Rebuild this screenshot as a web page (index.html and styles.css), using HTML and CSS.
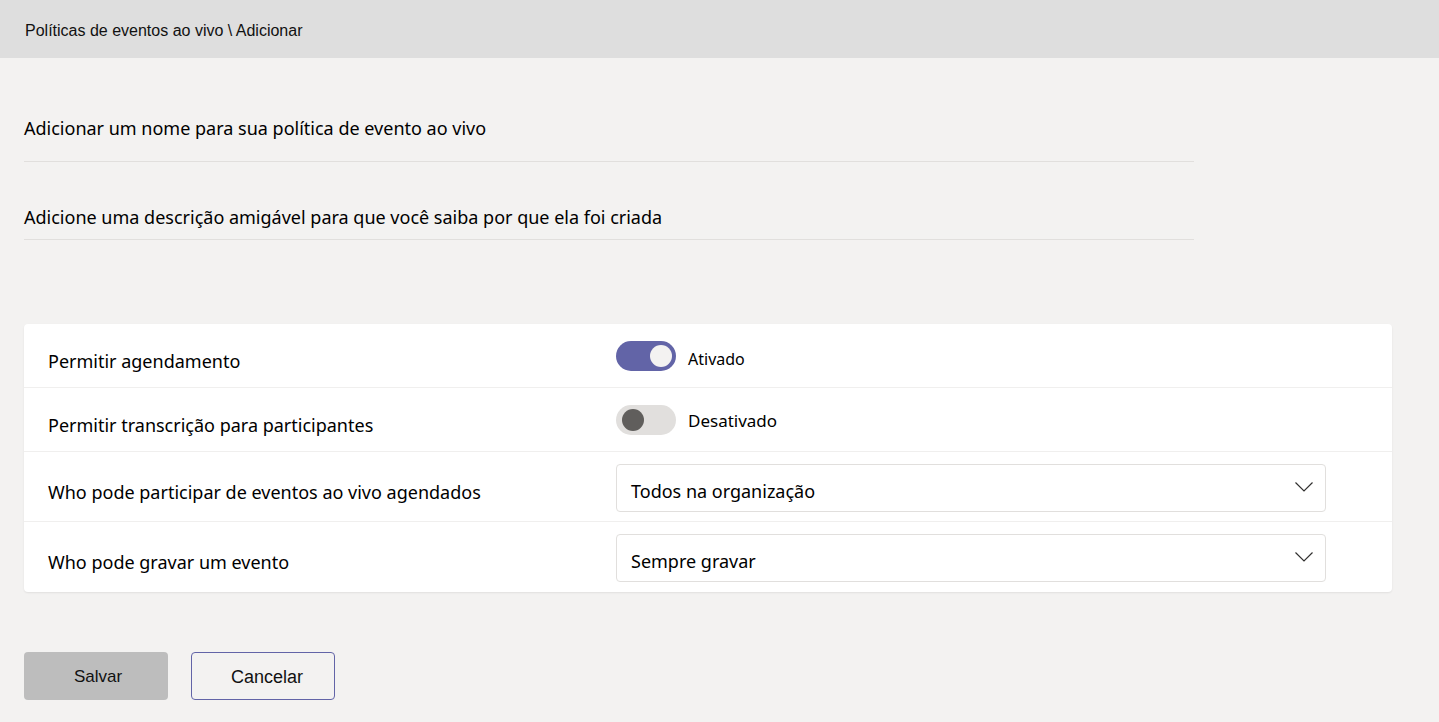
FILE: index.html
```html
<!DOCTYPE html>
<html lang="pt">
<head>
<meta charset="utf-8">
<title>Políticas de eventos ao vivo</title>
<link rel="stylesheet" href="styles.css">
</head>
<body>
<header class="topbar">Políticas de eventos ao vivo \ Adicionar</header>
<main class="content">
  <div class="field field-name">Adicionar um nome para sua política de evento ao vivo</div>
  <div class="field field-desc">Adicione uma descrição amigável para que você saiba por que ela foi criada</div>

  <section class="card">
    <div class="row row-toggle first">
      <div class="label">Permitir agendamento</div>
      <div class="control">
        <span class="toggle on"><span class="knob"></span></span>
        <span class="state">Ativado</span>
      </div>
    </div>
    <div class="row row-toggle">
      <div class="label">Permitir transcrição para participantes</div>
      <div class="control">
        <span class="toggle off"><span class="knob"></span></span>
        <span class="state state-off">Desativado</span>
      </div>
    </div>
    <div class="row row-select">
      <div class="label">Who pode participar de eventos ao vivo agendados</div>
      <div class="control">
        <div class="select">
          <span class="select-text">Todos na organização</span>
          <svg class="chev" width="18" height="10" viewBox="0 0 18 10"><path d="M0.5 0.5 L9 9 L17.5 0.5" fill="none" stroke="#323130" stroke-width="1.2"/></svg>
        </div>
      </div>
    </div>
    <div class="row row-select last">
      <div class="label">Who pode gravar um evento</div>
      <div class="control">
        <div class="select">
          <span class="select-text">Sempre gravar</span>
          <svg class="chev" width="18" height="10" viewBox="0 0 18 10"><path d="M0.5 0.5 L9 9 L17.5 0.5" fill="none" stroke="#323130" stroke-width="1.2"/></svg>
        </div>
      </div>
    </div>
  </section>

  <div class="actions">
    <button class="btn btn-save">Salvar</button>
    <button class="btn btn-cancel">Cancelar</button>
  </div>
</main>
</body>
</html>
```
FILE: styles.css
```css
* { box-sizing: border-box; }
html, body { margin: 0; padding: 0; }
body {
  background: #f3f2f1;
  font-family: "Noto Sans", "Liberation Sans", sans-serif;
  color: #000;
  width: 1439px;
  height: 722px;
  overflow: hidden;
}
.topbar {
  height: 58px;
  background: #dedede;
  font-family: "Liberation Sans", Arial, sans-serif;
  font-size: 16px;
  line-height: 58px;
  padding-top: 2px;
  padding-left: 25px;
  color: #111;
}
.content {
  padding: 0 24px;
}
.field {
  width: 1170px;
  font-size: 18px;
  border-bottom: 1px solid #e1dfdd;
}
.field-name {
  margin-top: 58px;
  height: 46px;
  line-height: 24px;
}
.field-desc {
  margin-top: 43px;
  height: 35px;
  line-height: 24px;
}
.card {
  margin-top: 84px;
  width: 1368px;
  background: #fff;
  border-radius: 4px;
  box-shadow: 0 1px 2px rgba(0,0,0,0.08);
}
.row {
  display: flex;
  align-items: center;
  border-bottom: 1px solid #f0efee;
}
.row.last { border-bottom: none; }
.row-toggle { height: 64px; }
.row-select { height: 70px; }
.label {
  width: 592px;
  padding-left: 24px;
  font-size: 18px;
  padding-top: 10px;
}
.row-select .label { padding-top: 10px; }
.control {
  display: flex;
  align-items: center;
  flex: 1;
}
.toggle {
  width: 60px;
  height: 30px;
  border-radius: 15px;
  display: inline-flex;
  align-items: center;
  padding: 0 4px;
}
.toggle .knob {
  width: 22px;
  height: 22px;
  border-radius: 50%;
}
.toggle.on { background: #6264a7; justify-content: flex-end; }
.toggle.on .knob { background: #f3f2f1; }
.toggle.off { background: #e1dfdd; justify-content: flex-start; padding-left: 6px; }
.toggle.off .knob { background: #605e5c; }
.state {
  margin-left: 12px;
  font-size: 16px;
  padding-top: 6px;
}
.state-off { font-size: 17px; padding-top: 2px; }
.select {
  width: 710px;
  height: 48px;
  margin-top: 2px;
  border: 1px solid #e1dfdd;
  border-radius: 4px;
  display: flex;
  align-items: center;
  justify-content: space-between;
  padding: 0 12px 0 14px;
  font-size: 18px;
}
.select-text { padding-top: 6px; }
.chev { margin-top: -2px; }
.actions {
  display: flex;
  gap: 23px;
  margin-top: 60px;
}
.btn {
  width: 144px;
  height: 48px;
  font-family: "Liberation Sans", Arial, sans-serif;
  font-size: 17px;
  color: #111;
  border-radius: 4px;
  padding-top: 3px;
}
.btn-save {
  background: #bdbdbd;
  border: none;
  padding-left: 10px;
}
.btn-cancel {
  background: transparent;
  border: 1px solid #6264a7;
  font-size: 18px;
  padding-left: 14px;
}
```
